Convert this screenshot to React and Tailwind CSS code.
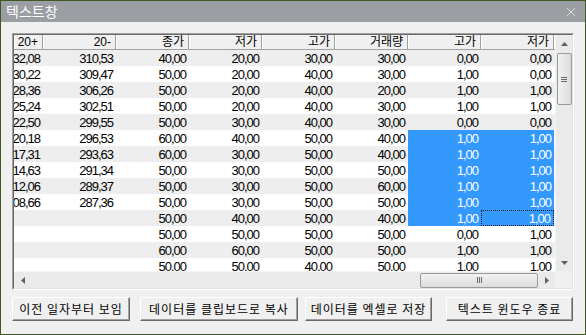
import React from 'react';

const columns = ['20+', '20-', '종가', '저가', '고가', '거래량', '고가', '저가'];

const rows = [
  ['32,08', '310,53', '40,00', '20,00', '30,00', '30,00', '0,00', '0,00'],
  ['30,22', '309,47', '50,00', '20,00', '40,00', '30,00', '1,00', '0,00'],
  ['28,36', '306,26', '50,00', '20,00', '40,00', '20,00', '1,00', '1,00'],
  ['25,24', '302,51', '50,00', '20,00', '40,00', '30,00', '1,00', '1,00'],
  ['22,50', '299,55', '50,00', '30,00', '40,00', '30,00', '0,00', '0,00'],
  ['20,18', '296,53', '60,00', '40,00', '50,00', '40,00', '1,00', '1,00'],
  ['17,31', '293,63', '60,00', '30,00', '50,00', '40,00', '1,00', '1,00'],
  ['14,63', '291,34', '50,00', '30,00', '50,00', '50,00', '1,00', '1,00'],
  ['12,06', '289,37', '50,00', '30,00', '50,00', '60,00', '1,00', '1,00'],
  ['08,66', '287,36', '50,00', '30,00', '50,00', '50,00', '1,00', '1,00'],
  ['', '', '50,00', '40,00', '50,00', '40,00', '1,00', '1,00'],
  ['', '', '50,00', '50,00', '50,00', '50,00', '0,00', '1,00'],
  ['', '', '60,00', '60,00', '50,00', '50,00', '1,00', '1,00'],
  ['', '', '50.00', '50.00', '40.00', '50.00', '1.00', '1.00'],
];

const colWidth = (i) => (i === 0 ? 'w-[29px]' : 'w-[73px]');

function isSelected(r, c) {
  return r >= 5 && r <= 10 && c >= 6;
}

function Cell({ value, r, c }) {
  const sel = isSelected(r, c);
  const focus = r === 10 && c === 7;
  return (
    <div
      className={`${colWidth(c)} shrink-0 h-full flex items-center justify-end overflow-hidden pr-[3px] ${
        sel ? 'bg-[#3399ff] text-white' : ''
      } ${focus ? 'border border-dotted border-[#1a1a1a] pr-[2px]' : ''}`}
    >
      <span className="whitespace-nowrap leading-none">{value}</span>
    </div>
  );
}

function Grip({ vertical }) {
  return (
    <div className={`flex ${vertical ? 'flex-col gap-[1px]' : 'flex-row gap-[1px]'}`}>
      {[0, 1, 2].map((i) => (
        <div
          key={i}
          className={vertical ? 'w-[6px] h-[1px] bg-[#6a6a6a]' : 'w-[1px] h-[6px] bg-[#6a6a6a]'}
        />
      ))}
    </div>
  );
}

function Arrow({ dir }) {
  const paths = {
    up: 'M0 4 L3.5 0 L7 4 Z',
    down: 'M0 0 L7 0 L3.5 4 Z',
    left: 'M4 0 L4 7 L0 3.5 Z',
    right: 'M0 0 L4 3.5 L0 7 Z',
  };
  const horiz = dir === 'left' || dir === 'right';
  return (
    <svg width={horiz ? 4 : 7} height={horiz ? 7 : 4} viewBox={horiz ? '0 0 4 7' : '0 0 7 4'}>
      <path d={paths[dir]} fill="#606060" />
    </svg>
  );
}

function Button({ label, className }) {
  return (
    <button
      className={`${className} h-[24px] bg-[#f0f0f0] border border-t-white border-l-white border-r-[#696969] border-b-[#696969] shadow-[inset_-1px_-1px_0_#a0a0a0] text-[12px] text-black tracking-[1px] flex items-center justify-center`}
    >
      {label}
    </button>
  );
}

export default function App() {
  return (
    <div
      className="w-[586px] h-[335px] border border-[#3e5a22] bg-[#f0f0f0] flex flex-col text-black"
      style={{ fontFamily: '"Liberation Sans", "Noto Sans CJK KR", sans-serif' }}
    >
      {/* Title bar */}
      <div className="h-[21px] bg-[#9b9ea3] flex items-center justify-between pl-[5px] pr-[9px]">
        <span className="text-white text-[14px] leading-none">텍스트창</span>
        <svg width="10" height="10" viewBox="0 0 10 10">
          <path d="M1 1 L9 9 M9 1 L1 9" stroke="#dcdcdc" strokeWidth="1" />
        </svg>
      </div>

      <div className="flex-1 pt-[11px] px-[11px]">
        {/* Grid */}
        <div className="h-[257px] border border-t-[#a0a0a0] border-l-[#a0a0a0] border-r-white border-b-white">
          <div className="h-full border border-t-[#696969] border-l-[#696969] border-r-[#e3e3e3] border-b-[#e3e3e3] bg-white flex flex-col">
            <div className="h-[236px] flex">
              <div className="flex-1 flex flex-col overflow-hidden text-[13px] tracking-[-1px]">
                {/* Header */}
                <div className="h-[15px] shrink-0 flex bg-[#f0f0f0] border-b border-[#a0a0a0]">
                  {columns.map((col, c) => (
                    <div
                      key={c}
                      className={`${colWidth(c)} shrink-0 h-full flex items-center justify-end pr-[4px] border-l border-white border-r border-r-[#a0a0a0] text-[12px] tracking-normal`}
                    >
                      <span className="whitespace-nowrap leading-none">{col}</span>
                    </div>
                  ))}
                  <div className="flex-1 border-l border-white" />
                </div>
                {/* Rows */}
                {rows.map((row, r) => (
                  <div
                    key={r}
                    className={`h-[16px] shrink-0 flex ${r % 2 === 0 ? 'bg-[#eeeeee]' : 'bg-white'}`}
                  >
                    {row.map((v, c) => (
                      <Cell key={c} value={v} r={r} c={c} />
                    ))}
                  </div>
                ))}
              </div>
              {/* Vertical scrollbar */}
              <div className="w-[17px] shrink-0 bg-[#eaeaea] border-l border-[#f5f5f5] flex flex-col items-center">
                <div className="h-[17px] flex items-center justify-center">
                  <Arrow dir="up" />
                </div>
                <div className="mt-[1px] w-[15px] h-[52px] rounded-[2px] border border-[#9a9a9a] bg-gradient-to-r from-[#f2f2f2] to-[#dcdcdc] flex items-center justify-center">
                  <Grip vertical />
                </div>
                <div className="flex-1" />
                <div className="h-[17px] flex items-center justify-center">
                  <Arrow dir="down" />
                </div>
              </div>
            </div>
            {/* Horizontal scrollbar */}
            <div className="h-[17px] shrink-0 flex">
              <div className="flex-1 bg-[#eaeaea] border-t border-[#f5f5f5] flex items-center">
                <div className="w-[17px] flex items-center justify-center">
                  <Arrow dir="left" />
                </div>
                <div className="flex-1" />
                <div className="w-[118px] h-[15px] rounded-[2px] border border-[#9a9a9a] bg-gradient-to-b from-[#f2f2f2] to-[#dcdcdc] flex items-center justify-center">
                  <Grip />
                </div>
                <div className="w-[17px] flex items-center justify-center">
                  <Arrow dir="right" />
                </div>
              </div>
              <div className="w-[17px] bg-[#f0f0f0]" />
            </div>
          </div>
        </div>

        {/* Buttons */}
        <div className="mt-[7px] flex" style={{ fontFamily: '"Noto Sans CJK KR", sans-serif' }}>
          <Button label="이전 일자부터 보임" className="w-[118px]" />
          <Button label="데이터를 클립보드로 복사" className="w-[158px] ml-[10px]" />
          <Button label="데이터를 엑셀로 저장" className="w-[127px] ml-[7px]" />
          <Button label="텍스트 윈도우 종료" className="w-[127px] ml-[14px]" />
        </div>
      </div>
    </div>
  );
}
